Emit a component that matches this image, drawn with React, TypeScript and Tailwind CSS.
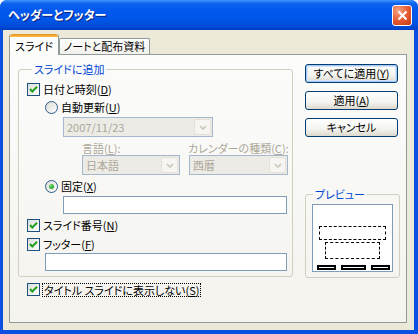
import React from "react";

function Check() {
  return (
    <span className="flex h-[13px] w-[13px] shrink-0 items-center justify-center border border-[#1c5180] bg-[linear-gradient(135deg,#dcdcd7,#ffffff)]">
      <svg width="11" height="11" viewBox="0 0 11 11">
        <path d="M2 5 L4.3 7.5 L9 2.8" fill="none" stroke="#21a121" strokeWidth="2" />
      </svg>
    </span>
  );
}

function Radio({ on }: { on?: boolean }) {
  return (
    <span className="flex h-[13px] w-[13px] shrink-0 items-center justify-center rounded-full border border-[#2c5c8c] bg-[linear-gradient(135deg,#dcdcd7,#ffffff)]">
      {on && <span className="h-[5px] w-[5px] rounded-full bg-[radial-gradient(circle_at_35%_35%,#7fe07f,#21a121_70%)]" />}
    </span>
  );
}

function Key({ k }: { k: string }) {
  return (
    <>
      (<span className="underline underline-offset-1">{k}</span>)
    </>
  );
}

function Combo({ value, className }: { value: string; className: string }) {
  return (
    <div className={`flex h-[20px] items-stretch border border-[#a5b6cf] bg-[#ecebe6] py-[1px] pr-[1px] ${className}`}>
      <span className="flex-1 pl-[3px] leading-[16px] text-[#aca899]">{value}</span>
      <span className="flex w-[17px] items-center justify-center rounded-[2px] border border-[#e4e2d8] bg-[#f6f5f1]">
        <svg width="8" height="5" viewBox="0 0 8 5">
          <path d="M1 1 L4 4 L7 1" fill="none" stroke="#c9c7ba" strokeWidth="1.6" />
        </svg>
      </span>
    </div>
  );
}

function XpButton({ children, primary }: { children: React.ReactNode; primary?: boolean }) {
  return (
    <button
      className={`flex h-[19px] w-[93px] items-center justify-center rounded-[3px] border border-[#003c74] bg-[linear-gradient(to_bottom,#ffffff,#f3f3ef_60%,#dcd8cc)] leading-none text-black ${
        primary ? "shadow-[inset_0_0_0_1px_#a8c8f4,inset_0_0_0_2px_#d4e4fa]" : ""
      }`}
    >
      {children}
    </button>
  );
}

export default function App() {
  return (
    <div className="flex h-[334px] w-[418px] flex-col overflow-hidden rounded-t-[7px] bg-[#0b4fe2] font-['Noto_Sans_CJK_JP',sans-serif] text-[11px] text-black [font-feature-settings:'palt']">
      {/* title bar */}
      <div className="flex h-[30px] shrink-0 items-center justify-between bg-[linear-gradient(to_bottom,#3e95fb_0%,#0e62f0_12%,#0058ee_35%,#0055e5_70%,#0049d6_90%,#003ec4_100%)] pl-[8px] pr-[6px]">
        <span className="text-[12px] font-bold text-white [text-shadow:1px_1px_#0a1f80]">ヘッダーとフッター</span>
        <span className="flex h-[21px] w-[20px] items-center justify-center rounded-[3px] border border-white bg-[radial-gradient(circle_at_30%_25%,#f7a584,#e4572f_55%,#c43a14)]">
          <svg width="11" height="11" viewBox="0 0 11 11">
            <path d="M1.5 1.5 L9.5 9.5 M9.5 1.5 L1.5 9.5" stroke="#ffffff" strokeWidth="2" />
          </svg>
        </span>
      </div>

      {/* dialog body */}
      <div className="mb-[4px] ml-[3px] mr-[4px] flex flex-1 flex-col bg-[#ece9d8] pl-[6px] pt-[4px]">
        {/* tabs */}
        <div className="flex h-[20px] items-end">
          <div className="relative z-10 -mb-[1px] flex h-[21px] w-[50px] flex-col rounded-t-[3px] border-x border-[#919b9c] bg-[#fcfcfb]">
            <div className="h-[3px] rounded-t-[3px] bg-[linear-gradient(to_bottom,#e68b2c,#ffc73c)]" />
            <div className="flex flex-1 items-center justify-center leading-none">スライド</div>
          </div>
          <div className="flex h-[16px] w-[91px] items-center justify-center rounded-t-[2px] border-x border-t border-[#919b9c] bg-[linear-gradient(to_bottom,#ffffff,#f1f0ea)] leading-none">
            ノートと配布資料
          </div>
        </div>

        {/* tab panel */}
        <div className="flex h-[269px] w-[398px] border border-[#919b9c] bg-[linear-gradient(to_bottom,#fcfcfb,#f4f3ee)] pl-[8px]">
          {/* left column */}
          <div className="mt-[7px] flex w-[275px] flex-col">
            <fieldset className="rounded-[3px] border border-[#d0d0bf] pb-[5px] pl-[8px]">
              <legend className="ml-[5px] px-[2px] leading-[14px] text-[#0046d5]">スライドに追加</legend>

              <div className="mt-[6px] flex h-[15px] items-center gap-[3px]">
                <Check />
                <span>
                  日付と時刻<Key k="D" />
                </span>
              </div>

              <div className="ml-[18px] mt-[3px] flex h-[15px] items-center gap-[3px]">
                <Radio />
                <span>
                  自動更新<Key k="U" />
                </span>
              </div>

              <Combo value="2007/11/23" className="ml-[36px] mt-[2px] w-[150px]" />

              <div className="ml-[55px] mt-[4px] flex h-[14px] items-center text-[#aca899]">
                <span className="w-[106px]">
                  言語<Key k="L" />:
                </span>
                <span>
                  カレンダーの種類<Key k="C" />:
                </span>
              </div>

              <div className="ml-[55px] flex gap-[9px]">
                <Combo value="日本語" className="w-[98px]" />
                <Combo value="西暦" className="w-[99px]" />
              </div>

              <div className="ml-[18px] mt-[4px] flex h-[15px] items-center gap-[3px]">
                <Radio on />
                <span>
                  固定<Key k="X" />
                </span>
              </div>

              <input readOnly className="ml-[36px] mt-[2px] block h-[18px] w-[224px] border border-[#7f9db9] bg-white" />

              <div className="mt-[4px] flex h-[15px] items-center gap-[3px]">
                <Check />
                <span>
                  スライド番号<Key k="N" />
                </span>
              </div>

              <div className="mt-[4px] flex h-[15px] items-center gap-[3px]">
                <Check />
                <span>
                  フッター<Key k="F" />
                </span>
              </div>

              <input readOnly className="ml-[18px] mt-[1px] block h-[18px] w-[242px] border border-[#7f9db9] bg-white" />
            </fieldset>

            <div className="ml-[9px] mt-[5px] flex h-[15px] items-center gap-[2px]">
              <Check />
              <span className="border border-dotted border-black px-[1px] leading-[12px]">
                タイトル スライドに表示しない<Key k="S" />
              </span>
            </div>
          </div>

          {/* right column */}
          <div className="ml-[12px] mt-[9px] flex flex-col">
            <div className="flex flex-col gap-[8px]">
              <XpButton primary>
                すべてに適用<Key k="Y" />
              </XpButton>
              <XpButton>
                適用<Key k="A" />
              </XpButton>
              <XpButton>キャンセル</XpButton>
            </div>

            <fieldset className="mt-[50px] w-[95px] rounded-[3px] border border-[#d0d0bf] pb-[5px] pl-[6px]">
              <legend className="ml-[1px] px-[2px] leading-[14px] text-[#0046d5]">プレビュー</legend>
              <div className="mt-[3px] flex h-[68px] w-[81px] flex-col border border-[#7f9db9] bg-white">
                <div className="ml-[6px] mt-[21px] h-[14px] w-[67px] border border-dashed border-black" />
                <div className="ml-[12px] mt-[2px] h-[17px] w-[55px] border border-dashed border-black" />
                <div className="ml-[4px] mt-[6px] flex gap-[5px]">
                  <div className="h-[5px] w-[19px] border-2 border-black bg-white" />
                  <div className="h-[5px] w-[25px] border-2 border-black bg-white" />
                  <div className="h-[5px] w-[19px] border-2 border-black bg-white" />
                </div>
              </div>
            </fieldset>
          </div>
        </div>
      </div>
    </div>
  );
}
